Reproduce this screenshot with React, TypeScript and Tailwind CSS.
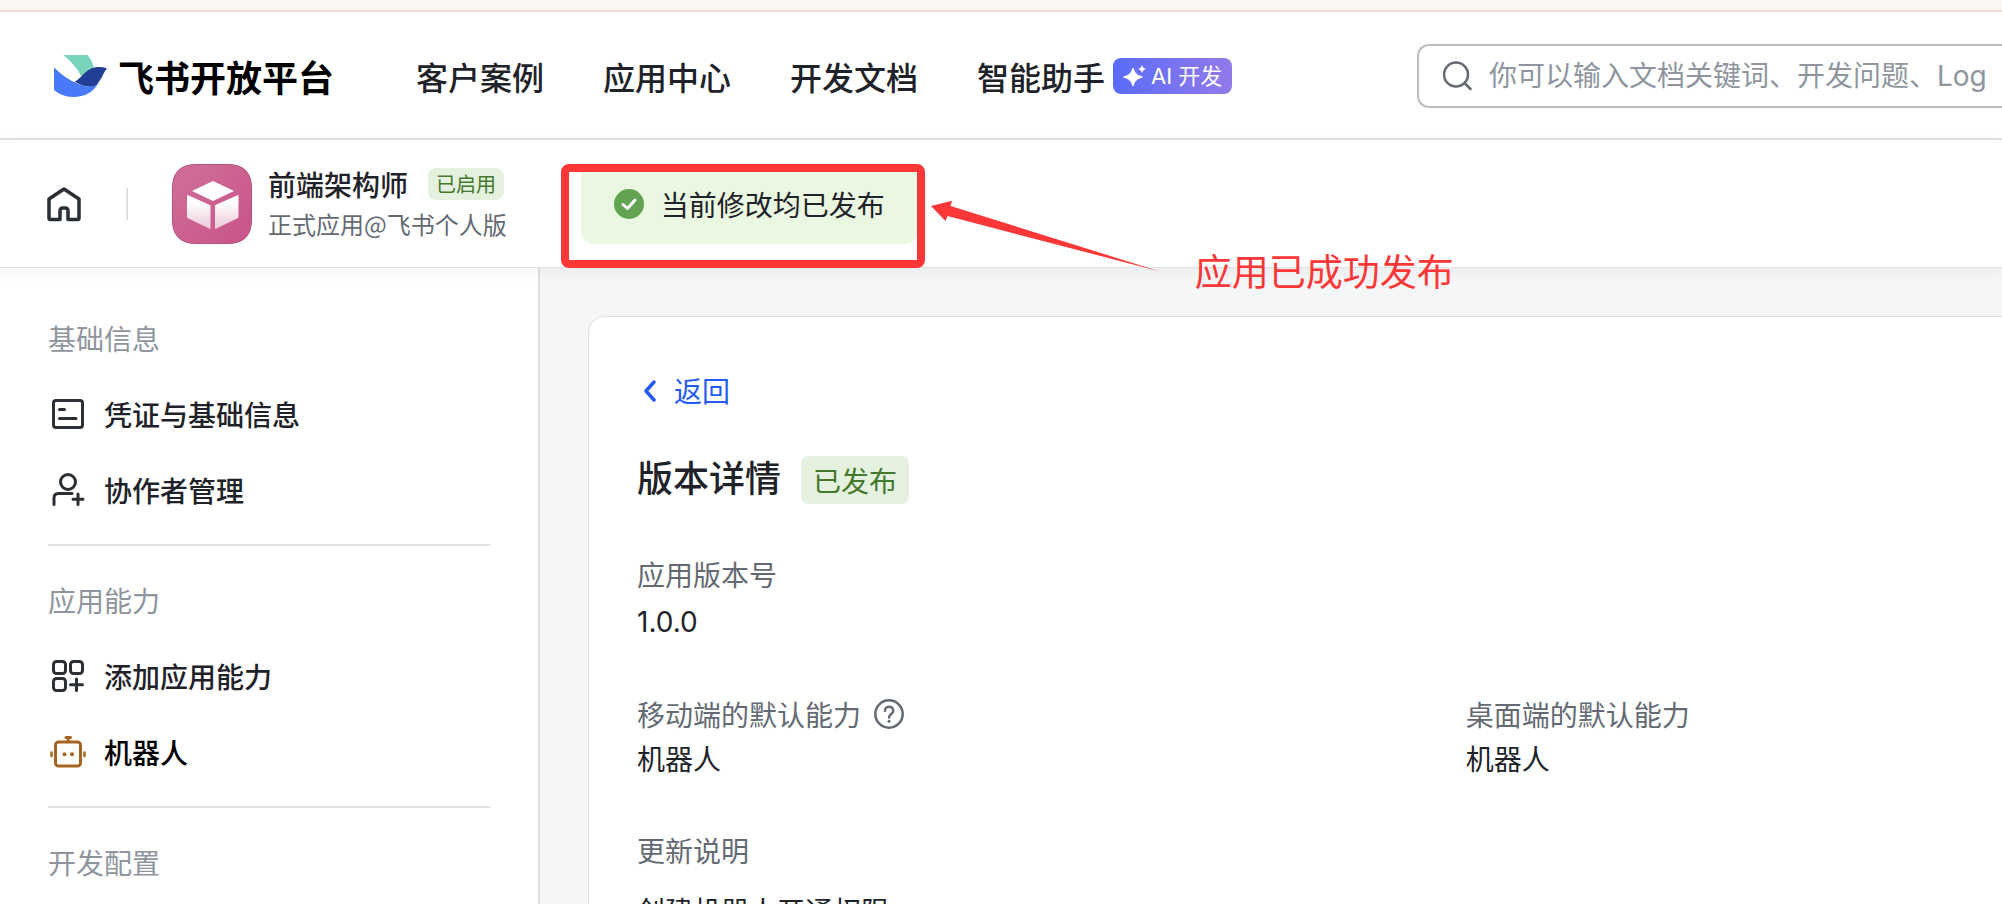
import type React from "react"

type IconProps = { className?: string }

function LogoIcon() {
  return (
    <svg width="54" height="42" viewBox="0 0 54 42" aria-hidden="true">
      <path d="M9 0H33.500C37 4 39 8 40 13C35 14 31 18 27.500 22C23 13 17 6 9 0Z" fill="#79d4bd" />
      <path d="M0 12.500C8 20 18 28 32 31.500C37 32 42 30 45 27C40 37 31 42 19 42C11 42 5 39 0 35Z" fill="#4879f8" />
      <path d="M20.500 26.800C29 22.500 32 12 45 12C48 12 50 12.300 53 13.500C49 18 47.500 25 43 29C37 34 28 31 20.500 26.800Z" fill="#213f94" />
    </svg>
  )
}

function HomeIcon() {
  return (
    <svg width="36" height="36" viewBox="0 0 36 36" fill="none" stroke="#2b2f36" strokeWidth="3.500" strokeLinejoin="round" aria-hidden="true">
      <path d="M3 13L18 3L33 13V32Q33 33.500 31.500 33.500H22V25Q22 22 19 22H17Q14 22 14 25V33.500H4.500Q3 33.500 3 32Z" />
    </svg>
  )
}

function AppAvatar() {
  return (
    <svg width="80" height="80" viewBox="0 0 80 80" aria-hidden="true">
      <defs>
        <linearGradient id="avatar-bg" x1="0" y1="0" x2="1" y2="1">
          <stop offset="0" stopColor="#cf7098" />
          <stop offset="1" stopColor="#c9538a" />
        </linearGradient>
        <linearGradient id="avatar-cube" x1="0" y1="0" x2="0" y2="1">
          <stop offset="0.2" stopColor="#ffffff" />
          <stop offset="1" stopColor="#ecc9da" />
        </linearGradient>
      </defs>
      <path
        d="M24 0.500H56Q79.500 0.500 79.500 24V56Q79.500 79.500 56 79.500H24Q0.500 79.500 0.500 56V24Q0.500 0.500 24 0.500Z"
        fill="url(#avatar-bg)"
        stroke="#b95384"
      />
      <path d="M41 17L62 27L41 37L20 27Z" fill="white" />
      <g fill="url(#avatar-cube)" stroke="url(#avatar-cube)" strokeLinejoin="round">
        <path d="M15.500 31.500L38 41.500V64.500L15.500 53.500Z" />
        <path d="M66 31.500L43.500 41.500V64.500L66 53.500Z" />
      </g>
    </svg>
  )
}

function CredentialIcon({ className }: IconProps) {
  return (
    <svg className={className} viewBox="0 0 36 36" fill="none" stroke="currentColor" strokeWidth="3" strokeLinecap="round" aria-hidden="true">
      <rect x="3.500" y="4.500" width="29" height="27" rx="2.500" />
      <path d="M9.500 13.500H14.500M9.500 22.500H26" />
    </svg>
  )
}

function MemberIcon({ className }: IconProps) {
  return (
    <svg className={className} viewBox="0 0 36 36" fill="none" stroke="currentColor" strokeWidth="3" strokeLinecap="round" aria-hidden="true">
      <circle cx="18" cy="10" r="7.500" />
      <path d="M4 32.500V26Q4 21.500 8.500 21.500H22M28 22V32.500M23 27.300H33" />
    </svg>
  )
}

function AddAbilityIcon({ className }: IconProps) {
  return (
    <svg className={className} viewBox="0 0 36 36" fill="none" stroke="currentColor" strokeWidth="3" strokeLinecap="round" aria-hidden="true">
      <rect x="3.500" y="3.500" width="12" height="12" rx="3" />
      <rect x="20.500" y="3.500" width="12" height="12" rx="3" />
      <rect x="3.500" y="20.500" width="12" height="12" rx="3" />
      <path d="M26.500 21V32.500M20.500 26.800H32.500" />
    </svg>
  )
}

function RobotIcon({ className }: IconProps) {
  return (
    <svg className={className} viewBox="0 0 36 36" fill="none" stroke="currentColor" strokeWidth="3" strokeLinecap="round" aria-hidden="true">
      <rect x="5.500" y="8" width="25" height="24" rx="3" />
      <path d="M16 3.500H20.500M18.200 3.500V7.500" />
      <path d="M1.500 18.500V22M34.500 18.500V22" strokeWidth="2.500" />
      <circle cx="14.500" cy="20.300" r="2" fill="currentColor" stroke="none" />
      <circle cx="22" cy="20.300" r="2" fill="currentColor" stroke="none" />
    </svg>
  )
}

const navItems = ["客户案例", "应用中心", "开发文档"]

const menuGroups: { title: string; items: { label: string; icon: React.FC<IconProps>; active?: boolean }[] }[] = [
  {
    title: "基础信息",
    items: [
      { label: "凭证与基础信息", icon: CredentialIcon },
      { label: "协作者管理", icon: MemberIcon },
    ],
  },
  {
    title: "应用能力",
    items: [
      { label: "添加应用能力", icon: AddAbilityIcon },
      { label: "机器人", icon: RobotIcon, active: true },
    ],
  },
  { title: "开发配置", items: [] },
]

function Header() {
  return (
    <header className="flex items-center h-32 pt-0.5 pl-[54px] border-b-2 border-[#dee0e3] bg-white">
      <a href="#" className="flex items-center gap-2.5 shrink-0 text-4xl leading-none font-bold text-black">
        <LogoIcon />
        飞书开放平台
      </a>
      <nav className="flex items-center gap-[59px] ml-[82px] shrink-0 text-[32px] font-medium">
        {navItems.map((item) => (
          <a key={item} href="#">
            {item}
          </a>
        ))}
        <a href="#" className="flex items-center gap-2">
          智能助手
          <span className="flex items-center gap-1 h-9 px-2.5 rounded-lg bg-linear-to-r from-[#586cf8] to-[#9279ea] font-['Inter','Noto_Sans_CJK_SC',sans-serif] text-[22px] font-normal text-white">
            <svg width="24" height="24" viewBox="0 0 24 24" fill="white" stroke="white" strokeLinejoin="round" aria-hidden="true">
              <path d="M10 4C12 9.500 13.500 11 19.500 13C13.500 15 12 16.500 10 22C8 16.500 6.500 15 0.500 13C6.500 11 8 9.500 10 4Z" />
              <path d="M19 1.500C19.700 3.500 20.500 4.300 22.500 5C20.500 5.700 19.700 6.500 19 8.500C18.300 6.500 17.500 5.700 15.500 5C17.500 4.300 18.300 3.500 19 1.500Z" strokeWidth="0.500" />
            </svg>
            AI 开发
          </span>
        </a>
      </nav>
      <label className="flex items-center gap-4 w-[585px] h-16 ml-auto pl-6 border-2 border-r-0 border-[#bbbfc4] rounded-l-xl">
        <svg className="shrink-0" width="30" height="30" viewBox="0 0 30 30" fill="none" stroke="#646a73" strokeWidth="2.500" strokeLinecap="round" aria-hidden="true">
          <circle cx="13" cy="13.500" r="12" />
          <path d="M22 22.500L27.500 28" />
        </svg>
        <input
          type="text"
          aria-label="搜索"
          placeholder="你可以输入文档关键词、开发问题、Log"
          className="flex-1 min-w-0 font-['Inter','Noto_Sans_CJK_SC',sans-serif] text-[28px] placeholder:text-[#8f959e] outline-none"
        />
      </label>
    </header>
  )
}

function AppBar() {
  return (
    <div className="relative z-10 flex items-center h-32 pl-[46px] border-b border-[#dee0e3] bg-white shadow-[0_4px_16px_rgba(31,35,41,0.05)]">
      <a href="#" aria-label="首页">
        <HomeIcon />
      </a>
      <div className="w-0.5 h-8 ml-11 mr-11 bg-[#dee0e3]" />
      <AppAvatar />
      <div className="ml-4">
        <div className="flex items-center gap-5 h-10">
          <h1 className="text-[28px] font-medium">前端架构师</h1>
          <span className="px-2 rounded-lg bg-[#e4f1df] text-xl leading-8 text-[#44782c]">已启用</span>
        </div>
        <p className="text-2xl leading-10 text-[#646a73]">正式应用@飞书个人版</p>
      </div>

      <div className="relative ml-[74px]">
        <div className="flex items-center gap-4 h-20 px-8 rounded-xl bg-[#eaf7e1] text-[28px]">
          <svg width="32" height="32" viewBox="0 0 32 32" aria-hidden="true">
            <circle cx="16" cy="16" r="15" fill="#62a352" />
            <path d="M10 16.500L14.500 20.500L22 12" fill="none" stroke="white" strokeWidth="3" strokeLinecap="round" strokeLinejoin="round" />
          </svg>
          当前修改均已发布
        </div>

        {/* Annotation: frame, arrow and note */}
        <div className="absolute -left-5 top-0 w-[364px] h-[104px] border-8 border-[#fc3737] rounded-lg" />
        <svg className="absolute left-[350px] top-9" width="232" height="74" viewBox="0 0 232 74" aria-hidden="true">
          <path d="M0 6L21 0.700L19.500 6L229 71.500L16.500 16L14.500 21Z" fill="#fc3737" />
        </svg>
        <p className="absolute left-[614px] top-20 whitespace-nowrap text-[37px] leading-13 text-[#fc3737]">应用已成功发布</p>
      </div>
    </div>
  )
}

function Sidebar() {
  return (
    <aside className="w-[540px] shrink-0 px-12 pt-8 border-r-2 border-[#dee0e3] bg-white text-[28px]">
      {menuGroups.map((group) => (
        <section key={group.title} className="pb-4 mb-4 border-b-2 border-[#dee0e3]">
          <h2 className="leading-[76px] text-[#8f959e]">{group.title}</h2>
          <ul className="font-medium">
            {group.items.map(({ label, icon: Icon, active }) => (
              <li key={label}>
                <a href="#" className={active ? "flex items-center h-19 gap-[18px] pl-0.5 text-black" : "flex items-center h-19 gap-[18px] pl-0.5"}>
                  <Icon className={active ? "w-9 h-9 text-[#a66321]" : "w-9 h-9 text-[#2b2f36]"} />
                  {label}
                </a>
              </li>
            ))}
          </ul>
        </section>
      ))}
    </aside>
  )
}

function VersionDetail() {
  return (
    <section className="h-full p-12 pr-0 border-t border-l border-[#dee0e3] rounded-tl-2xl bg-white text-[28px]">
      <a href="#" className="flex items-center gap-[18px] pl-[7px] leading-[51px] text-[#245bf5]">
        <svg width="12" height="22" viewBox="0 0 12 22" fill="none" stroke="currentColor" strokeWidth="3.500" strokeLinecap="round" strokeLinejoin="round" aria-hidden="true">
          <path d="M10 2L2 11L10 20" />
        </svg>
        返回
      </a>
      <div className="flex items-start gap-5 mt-10">
        <h2 className="text-4xl leading-10 font-medium">版本详情</h2>
        <span className="px-3 rounded-lg bg-[#e4f1df] leading-12 text-[#44782c]">已发布</span>
      </div>

      <dl className="grid grid-cols-[17fr_11fr] gap-y-12 mt-12 leading-11">
        <div className="col-span-2">
          <dt className="text-[#646a73]">应用版本号</dt>
          <dd className="mt-1 font-['Inter',sans-serif]">1.0.0</dd>
        </div>
        <div>
          <dt className="flex items-center gap-3 text-[#646a73]">
            移动端的默认能力
            <button type="button" aria-label="帮助">
              <svg width="32" height="32" viewBox="0 0 32 32" fill="none" stroke="currentColor" strokeWidth="2.500" strokeLinecap="round" aria-hidden="true">
                <circle cx="16" cy="16" r="13.700" />
                <path d="M12 12.800C12 7.500 20.300 7.500 20.300 12.700C20.300 16 16 16 16 19.500" />
                <circle cx="16" cy="23.300" r="1.500" fill="currentColor" stroke="none" />
              </svg>
            </button>
          </dt>
          <dd>机器人</dd>
        </div>
        <div>
          <dt className="text-[#646a73]">桌面端的默认能力</dt>
          <dd>机器人</dd>
        </div>
        <div className="col-span-2">
          <dt className="text-[#646a73]">更新说明</dt>
          <dd className="mt-4">创建机器人开通权限</dd>
        </div>
      </dl>
    </section>
  )
}

export default function App() {
  return (
    <div className="flex flex-col h-screen overflow-hidden bg-[#f5f6f7] font-['Noto_Sans_CJK_SC',sans-serif] text-[#1f2329]">
      <div className="h-3 shrink-0 border-b-2 border-[#f0dfd2] bg-[#fdf7f4]" />
      <div className="shrink-0">
        <Header />
        <AppBar />
      </div>
      <div className="flex flex-1 min-h-0">
        <Sidebar />
        <main className="flex-1 min-w-0 pl-12 pt-12">
          <VersionDetail />
        </main>
      </div>
    </div>
  )
}
